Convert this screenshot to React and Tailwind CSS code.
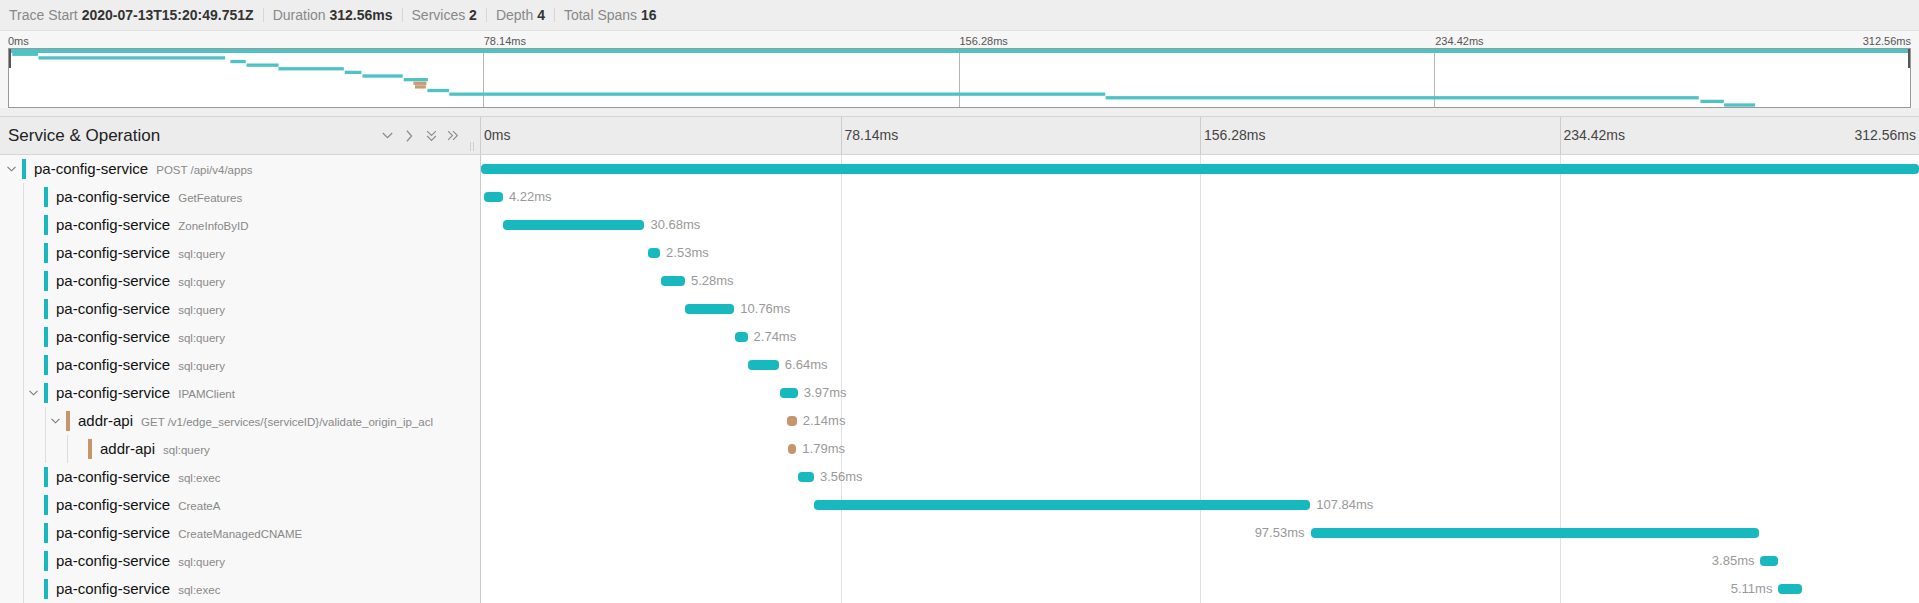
import React from 'react';

const TOTAL = 312.56;
const TEAL = '#17b8be';
const TAN = '#c7956b';

const spans = [
  { svc: 'pa-config-service', op: 'POST /api/v4/apps', start: 0, dur: 312.56, depth: 0, kids: true },
  { svc: 'pa-config-service', op: 'GetFeatures', start: 0.55, dur: 4.22, depth: 1 },
  { svc: 'pa-config-service', op: 'ZoneInfoByID', start: 4.85, dur: 30.68, depth: 1 },
  { svc: 'pa-config-service', op: 'sql:query', start: 36.4, dur: 2.53, depth: 1 },
  { svc: 'pa-config-service', op: 'sql:query', start: 39.05, dur: 5.28, depth: 1 },
  { svc: 'pa-config-service', op: 'sql:query', start: 44.3, dur: 10.76, depth: 1 },
  { svc: 'pa-config-service', op: 'sql:query', start: 55.2, dur: 2.74, depth: 1 },
  { svc: 'pa-config-service', op: 'sql:query', start: 58.1, dur: 6.64, depth: 1 },
  { svc: 'pa-config-service', op: 'IPAMClient', start: 64.9, dur: 3.97, depth: 1, kids: true },
  { svc: 'addr-api', op: 'GET /v1/edge_services/{serviceID}/validate_origin_ip_acl', start: 66.5, dur: 2.14, depth: 2, kids: true, tan: true },
  { svc: 'addr-api', op: 'sql:query', start: 66.75, dur: 1.79, depth: 3, tan: true },
  { svc: 'pa-config-service', op: 'sql:exec', start: 68.8, dur: 3.56, depth: 1 },
  { svc: 'pa-config-service', op: 'CreateA', start: 72.4, dur: 107.84, depth: 1 },
  { svc: 'pa-config-service', op: 'CreateManagedCNAME', start: 180.3, dur: 97.53, depth: 1 },
  { svc: 'pa-config-service', op: 'sql:query', start: 278.1, dur: 3.85, depth: 1 },
  { svc: 'pa-config-service', op: 'sql:exec', start: 282.0, dur: 5.11, depth: 1 },
];

const ticks = ['0ms', '78.14ms', '156.28ms', '234.42ms'];

const ChevronDown = ({ className = '', w = 9, h = 6 }) => (
  <svg width={w} height={h} viewBox="0 0 9 6" className={className} fill="none" stroke="currentColor" strokeWidth="1.1">
    <polyline points="0.5,0.8 4.5,4.8 8.5,0.8" />
  </svg>
);

const Sep = () => <span className="border-l border-[#d6d6d6] h-[14px] mx-[9px]" />;

const Minimap = () => {
  const W = 1901;
  const H = 58;
  const step = H / 16;
  return (
    <svg width={W} height={H} viewBox={`0 0 ${W} ${H}`} className="block">
      {[1, 2, 3].map((k) => (
        <rect key={k} x={Math.round((W * k) / 4) - 1} y="0" width="1" height={H} fill="#b5b5b5" />
      ))}
      {spans.map((s, i) => (
        <rect
          key={i}
          x={(s.start / TOTAL) * W}
          y={i * step}
          width={Math.max((s.dur / TOTAL) * W, 2)}
          height={i === 0 ? 4 : 3.3}
          fill={s.tan ? '#c99a76' : '#4fc2c5'}
        />
      ))}
      <rect x="0" y="0" width="2" height="19" fill="#555" />
      <rect x={W - 2} y="0" width="2" height="19" fill="#555" />
    </svg>
  );
};

const Row = ({ s }) => {
  const left = (s.start / TOTAL) * 100;
  const width = (s.dur / TOTAL) * 100;
  const onLeft = s.start / TOTAL > 0.5;
  const label = `${s.dur.toFixed(2)}ms`;
  return (
    <div className="flex h-[28px]">
      <div className="w-[481px] shrink-0 border-r border-[#cccccc] bg-[#f8f8f8] flex items-center h-full">
        {Array.from({ length: s.depth + 1 }).map((_, i) => (
          <div key={i} className="w-[22px] h-full shrink-0 pl-[1px]">
            <div
              className={`h-full border-l flex items-center justify-center text-[#777] ${
                i > 0 ? 'border-[#dddddd]' : 'border-transparent'
              }`}
            >
              {i === s.depth && s.kids && <ChevronDown className="mr-[2px]" />}
            </div>
          </div>
        ))}
        <div className="w-[4px] h-[20px] shrink-0" style={{ backgroundColor: s.tan ? TAN : TEAL }} />
        <div className="ml-[8px] flex items-baseline whitespace-nowrap">
          <span className="text-[15px] text-[#111]">{s.svc}</span>
          <span className="ml-[8px] text-[11.5px] text-[#888]">{s.op}</span>
        </div>
      </div>
      <div className="flex-1 relative h-full">
        <div className="grid grid-cols-4 h-full">
          <div />
          <div className="border-l border-[#e0e0e0]" />
          <div className="border-l border-[#e0e0e0]" />
          <div className="border-l border-[#e0e0e0]" />
        </div>
        <div
          className="absolute top-1/2 -translate-y-1/2 h-[10px] rounded-[4px]"
          style={{ left: `${left}%`, width: `${width}%`, backgroundColor: s.tan ? TAN : TEAL }}
        />
        {s.depth > 0 &&
          (onLeft ? (
            <span
              className="absolute top-1/2 -translate-y-1/2 text-[13px] text-[#999] whitespace-nowrap"
              style={{ right: `calc(${100 - left}% + 6px)` }}
            >
              {label}
            </span>
          ) : (
            <span
              className="absolute top-1/2 -translate-y-1/2 text-[13px] text-[#999] whitespace-nowrap"
              style={{ left: `calc(${left + width}% + 6px)` }}
            >
              {label}
            </span>
          ))}
      </div>
    </div>
  );
};

export default function App() {
  return (
    <div className="w-[1919px] h-[603px] overflow-hidden bg-white font-['Liberation_Sans',Arial,sans-serif]">
      {/* trace summary */}
      <div className="h-[31px] bg-[#eeeeee] border-b border-[#e0e0e0] flex items-center pl-[9px] text-[14px] text-[#888]">
        <span>
          Trace Start <b className="text-[#333]">2020-07-13T15:20:49.751Z</b>
        </span>
        <Sep />
        <span>
          Duration <b className="text-[#333]">312.56ms</b>
        </span>
        <Sep />
        <span>
          Services <b className="text-[#333]">2</b>
        </span>
        <Sep />
        <span>
          Depth <b className="text-[#333]">4</b>
        </span>
        <Sep />
        <span>
          Total Spans <b className="text-[#333]">16</b>
        </span>
      </div>

      {/* minimap */}
      <div className="bg-[#f6f6f6] px-[8px] pt-[3px]">
        <div className="grid grid-cols-4 h-[14px] text-[11px] leading-[14px] text-[#555]">
          <span>0ms</span>
          <span>78.14ms</span>
          <span>156.28ms</span>
          <div className="flex justify-between">
            <span>234.42ms</span>
            <span>312.56ms</span>
          </div>
        </div>
        <div className="h-[60px] border border-[#999] bg-white">
          <Minimap />
        </div>
      </div>
      <div className="h-[8px] bg-[#efefef]" />

      {/* column header */}
      <div className="flex h-[39px] border-y border-[#d4d4d4] bg-[#ececec]">
        <div className="w-[481px] shrink-0 border-r border-[#cccccc] flex items-center pl-[8px]">
          <span className="text-[17px] text-[#222]">Service &amp; Operation</span>
          <div className="flex-1" />
          <div className="flex items-center text-[#8a8a8a]">
            <span className="w-[22px] flex justify-center">
              <ChevronDown w={11} h={7} />
            </span>
            <span className="w-[22px] flex justify-center">
              <svg width="7" height="12" viewBox="0 0 6 10" fill="none" stroke="currentColor" strokeWidth="1">
                <polyline points="0.8,0.5 4.8,5 0.8,9.5" />
              </svg>
            </span>
            <span className="w-[22px] flex justify-center">
              <svg width="11" height="12" viewBox="0 0 10 11" fill="none" stroke="currentColor" strokeWidth="1">
                <polyline points="1,1 5,5 9,1" />
                <polyline points="1,5.5 5,9.5 9,5.5" />
              </svg>
            </span>
            <span className="w-[22px] flex justify-center">
              <svg width="12" height="11" viewBox="0 0 11 10" fill="none" stroke="currentColor" strokeWidth="1">
                <polyline points="1,1 5,5 1,9" />
                <polyline points="5.5,1 9.5,5 5.5,9" />
              </svg>
            </span>
          </div>
          <div className="w-[16px] h-full flex items-end justify-end pr-[6px] pb-[3px] gap-[2px]">
            <span className="w-px h-[9px] bg-[#cfcfcf]" />
            <span className="w-px h-[9px] bg-[#cfcfcf]" />
          </div>
        </div>
        <div className="flex-1 grid grid-cols-4 text-[14px] text-[#444]">
          <div className="flex items-center pl-[3px]">{ticks[0]}</div>
          <div className="flex items-center pl-[3px] border-l border-[#cccccc]">{ticks[1]}</div>
          <div className="flex items-center pl-[3px] border-l border-[#cccccc]">{ticks[2]}</div>
          <div className="flex items-center justify-between pl-[3px] pr-[3px] border-l border-[#cccccc]">
            <span>{ticks[3]}</span>
            <span>312.56ms</span>
          </div>
        </div>
      </div>

      {/* rows */}
      <div>
        {spans.map((s, i) => (
          <Row key={i} s={s} />
        ))}
      </div>
    </div>
  );
}
